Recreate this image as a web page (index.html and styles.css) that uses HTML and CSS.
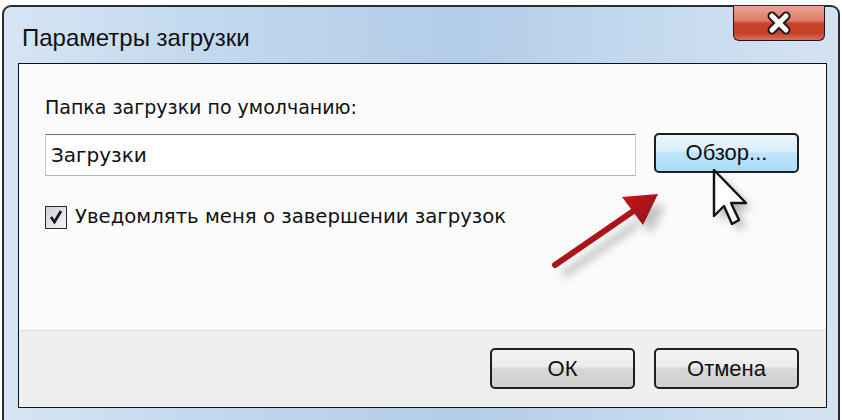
FILE: index.html
```html
<!DOCTYPE html>
<html lang="ru">
<head>
    <meta charset="UTF-8">
    <title>Параметры загрузки</title>
    <link rel="stylesheet" href="styles.css">
</head>
<body>

    <div class="window">
        <div class="titlebar">
            <span class="title">Параметры загрузки</span>
            <button class="close" type="button" aria-label="Закрыть">
                <svg width="34" height="24" viewBox="0 0 34 24">
                    <path d="M10 5 L24 19 M24 5 L10 19" stroke="#2a1a1a" stroke-width="9" stroke-linecap="round"/>
                    <path d="M10 5 L24 19 M24 5 L10 19" stroke="#fff" stroke-width="5" stroke-linecap="round"/>
                </svg>
            </button>
        </div>

        <div class="client">
            <div class="content">
                <p class="label">Папка загрузки по умолчанию:</p>
                <div class="path-row">
                    <div class="field">Загрузки</div>
                    <button class="btn btn-hot" type="button">Обзор...</button>
                </div>
                <label class="check-row">
                    <span class="checkbox">
                        <svg width="16" height="16" viewBox="0 0 16 16">
                            <path d="M3 8 L6.5 13 L13 2" fill="none" stroke="#1a1a1a" stroke-width="2.8"/>
                        </svg>
                    </span>
                    Уведомлять меня о завершении загрузок
                </label>
            </div>
            <div class="footer">
                <button class="btn" type="button">ОК</button>
                <button class="btn" type="button">Отмена</button>
            </div>
        </div>

        <!-- pointer arrow and mouse cursor drawn on top of the dialog -->
        <svg class="overlay" width="842" height="420" viewBox="0 0 842 420">
            <defs>
                <filter id="soft" x="-50%" y="-50%" width="200%" height="200%">
                    <feGaussianBlur stdDeviation="4"/>
                </filter>
                <linearGradient id="red" x1="0" y1="0" x2="1" y2="1">
                    <stop offset="0" stop-color="#c8161c"/>
                    <stop offset="1" stop-color="#8e1216"/>
                </linearGradient>
            </defs>
            <g opacity="0.35" filter="url(#soft)" transform="translate(8,10)">
                <path d="M553 265 L628 213" stroke="#555" stroke-width="7"/>
                <path d="M655 195 L621 197 L641 224 Z" fill="#555"/>
            </g>
            <path d="M553 265 L630 212" stroke="url(#red)" stroke-width="6" stroke-linecap="round"/>
            <path d="M656 194 L620 197 L641 225 Z" fill="url(#red)"/>

            <g opacity="0.4" filter="url(#soft)" transform="translate(6,6)">
                <path d="M712 170 L712 216 L722 206 L730 224 L737 220 L729 203 L744 203 Z" fill="#444"/>
            </g>
            <path d="M712 170 L712 216 L722 206 L730 224 L737 220 L729 203 L744 203 Z" fill="#fff" stroke="#111" stroke-width="2.4" stroke-linejoin="round"/>
        </svg>
    </div>

</body>
</html>
```

FILE: styles.css
```css
body {
    margin: 0;
    background-color: #fff;
    font-family: 'DejaVu Sans', sans-serif;
    color: #111;
}
.window {
    position: relative;
    box-sizing: border-box;
    width: 838px;
    height: 418px;
    margin: 5px 0 0 2px;
    padding: 0 11px 0 14px;
    border: 2px solid #2a2d31;
    border-bottom-width: 0;
    border-radius: 9px 9px 0 0;
    background: linear-gradient(to right, #d6e5f4 0%, #c2d8ee 25%, #b3cce8 55%, #c7dbef 80%, #d4e3f2 100%);
}
.titlebar {
    display: flex;
    justify-content: space-between;
    align-items: flex-start;
    height: 56px;
}
.title {
    padding: 17px 0 0 4px;
    font-family: 'Liberation Sans', Arial, sans-serif;
    font-size: 24px;
    line-height: 28px;
}
.close {
    display: flex;
    align-items: center;
    justify-content: center;
    width: 92px;
    height: 35px;
    margin: -1px 2px 0 0;
    padding: 0;
    border: 1.5px solid #2b1510;
    border-top: 0;
    border-radius: 0 0 6px 6px;
    background: linear-gradient(#eba396 0%, #df7c68 42%, #c9412a 52%, #c5402a 80%, #d9705b 100%);
}
.client {
    border: 1.5px solid #111;
    background-color: #fbfbfb;
}
.content {
    height: 266px;
    padding: 31px 26px 0;
    box-sizing: border-box;
}
.label {
    margin: 0;
    font-size: 19px;
    line-height: 24px;
}
.path-row {
    display: flex;
    gap: 18px;
    margin-top: 15px;
}
.field {
    box-sizing: border-box;
    width: 591px;
    height: 42px;
    padding: 0 5px;
    border: 1px solid #c9c9c9;
    border-top-color: #6f6f6f;
    border-bottom-color: #b5b5b5;
    background-color: #fff;
    font-size: 20px;
    line-height: 40px;
}
.btn {
    box-sizing: border-box;
    width: 145px;
    height: 41px;
    padding: 0;
    border: 2px solid #1f1f1f;
    border-radius: 5px;
    background: linear-gradient(#f3f3f3 0%, #ececec 45%, #d9d9d9 50%, #cfcfcf 100%);
    font-family: 'Liberation Sans', Arial, sans-serif;
    font-size: 22px;
    color: #111;
}
.btn-hot {
    height: 40px;
    margin-top: -1px;
    background: linear-gradient(#eaf6fd 0%, #d9effc 45%, #bee6fd 50%, #a9dbf6 100%);
}
.check-row {
    display: flex;
    align-items: center;
    gap: 8px;
    margin-top: 29px;
    font-size: 19.7px;
    line-height: 24px;
}
.checkbox {
    display: flex;
    align-items: center;
    justify-content: center;
    box-sizing: border-box;
    width: 22px;
    height: 23px;
    border: 1.5px solid #2b2b2b;
    background: linear-gradient(135deg, #cfd3d8, #f4f4f4);
}
.footer {
    display: flex;
    justify-content: flex-end;
    gap: 19px;
    height: 77px;
    box-sizing: border-box;
    padding: 17px 27px 0 0;
    border-top: 1px solid #dcdcdc;
    background-color: #efefef;
}
.overlay {
    position: absolute;
    left: -2px;
    top: -7px;
    pointer-events: none;
}
```
